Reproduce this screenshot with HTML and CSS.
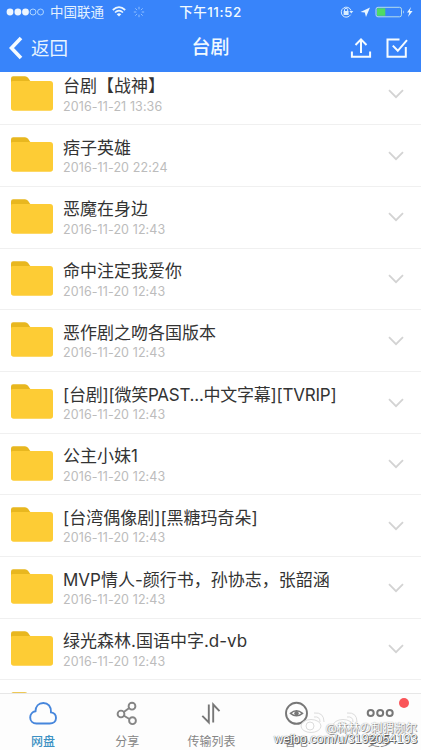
FILE: index.html
```html
<!DOCTYPE html>
<html lang="zh-CN">
<head>
<meta charset="utf-8">
<title>台剧</title>
<link rel="stylesheet" href="styles.css">
</head>
<body>
<svg class="defs" width="0" height="0">
  <symbol id="folder" viewBox="0 0 42 35">
    <path d="M0 12V2.5Q0 .3 2.2.3H14q1.8 0 3 1.5l3.2 4.4V12z" fill="#e8b71f"/>
    <path d="M0 5.8q.5-.9 2-.9H39q3 0 3 3V32q0 2.7-2.7 2.7H2.7Q0 34.7 0 32z" fill="#fdcc35"/>
  </symbol>
  <symbol id="chevron" viewBox="0 0 16 10"><path d="M1 1.2l7 7 7-7" fill="none" stroke="#d3d3d3" stroke-width="1.8"/></symbol>
</svg>
<div class="app">
  <header class="header">
    <div class="status">
      <div class="status-side">
        <svg class="signal" width="39" height="10" viewBox="0 0 39 10"><g fill="#eef6ff"><circle cx="4" cy="5" r="3.4"/><circle cx="11.9" cy="5" r="3.4"/><circle cx="19.5" cy="5" r="3.4"/></g><g fill="none" stroke="#b9dcff" stroke-width=".9"><circle cx="27" cy="5" r="3"/><circle cx="34.5" cy="5" r="3"/></g></svg>
        <span class="carrier">中国联通</span>
        <svg class="wifi" width="14" height="11" viewBox="0 0 14 11"><g fill="none" stroke="#eaf6ff" stroke-width="1.7"><path d="M.8 4Q7-1.7 13.200 4M3 6.500Q7 2.800 11 6.500"/></g><path d="M4.700 8.200Q7 6.300 9.300 8.200L7 10.600z" fill="#eaf6ff"/></svg>
        <svg class="spinner" width="12" height="12" viewBox="0 0 12 12" stroke="#8fbfff" stroke-width="1"><path d="M6 .8v2.500M6 8.700v2.500M.8 6h2.500M8.700 6h2.500M2.300 2.300l1.800 1.800M7.900 7.900l1.800 1.800M2.300 9.700l1.800-1.800M7.900 4.100l1.800-1.800"/></svg>
      </div>
      <span class="clock">下午11:52</span>
      <div class="status-side right">
        <svg width="80" height="14" viewBox="0 0 80 14">
          <g fill="none" stroke="#d8edff" stroke-width="1"><path d="M11.600 9.700A5 5 0 1 1 12 5.500"/><path d="M5.500 6V4.800q0-1.500 1.600-1.500t1.600 1.500V6"/></g>
          <path d="M4.600 6h5v4h-5zM10.300 6h4l-2 2.600z" fill="#d8edff"/>
          <path d="M31 2.500L27 12l-1.200-4.600L21.500 7z" fill="#e9f6ff"/>
          <rect x="37" y="2.300" width="25.500" height="9.500" rx="2" fill="none" stroke="#b5dceb"/>
          <path d="M38 3.300h8.300v7.500H38z" fill="#4fdb63"/><path d="M64 5.300q1.700 1.700 0 3.500z" fill="#cce9ff"/>
          <path d="M72 2l-4 5.500h2.300L69 12l4.600-6h-2.700z" fill="#e8f6ff"/>
        </svg>
      </div>
    </div>
    <div class="nav">
      <div class="back">
        <svg width="15" height="24" viewBox="0 0 15 24"><path d="M13 2L3.500 12l9.500 10" fill="none" stroke="#f5fbff" stroke-width="3.600"/></svg>
        <span>返回</span>
      </div>
      <h1>台剧</h1>
      <div class="actions">
        <svg width="22" height="22" viewBox="0 0 22 22"><g fill="none" stroke="#f5fbff" stroke-width="2"><path d="M11 16V2.800M5.500 8L11 2.400 16.500 8M1.900 14.500v5.300h18.200v-5.300"/></g></svg>
        <svg width="22" height="22" viewBox="0 0 22 22"><g fill="none" stroke="#f5fbff" stroke-width="2"><path d="M13.500 2.500H1.500v17.300h18.300V10"/><path d="M6.800 8.600l5 5.200L21 3.200"/></g></svg>
      </div>
    </div>
  </header>
  <main class="list">
    <div class="rows">
      <div class="row"><svg class="folder"><use href="#folder"/></svg><div class="info"><div class="name">台剧【战神】</div><div class="date">2016-11-21 13:36</div></div><svg class="chevron"><use href="#chevron"/></svg></div>
      <div class="row"><svg class="folder"><use href="#folder"/></svg><div class="info"><div class="name">痞子英雄</div><div class="date">2016-11-20 22:24</div></div><svg class="chevron"><use href="#chevron"/></svg></div>
      <div class="row"><svg class="folder"><use href="#folder"/></svg><div class="info"><div class="name">恶魔在身边</div><div class="date">2016-11-20 12:43</div></div><svg class="chevron"><use href="#chevron"/></svg></div>
      <div class="row"><svg class="folder"><use href="#folder"/></svg><div class="info"><div class="name">命中注定我爱你</div><div class="date">2016-11-20 12:43</div></div><svg class="chevron"><use href="#chevron"/></svg></div>
      <div class="row"><svg class="folder"><use href="#folder"/></svg><div class="info"><div class="name">恶作剧之吻各国版本</div><div class="date">2016-11-20 12:43</div></div><svg class="chevron"><use href="#chevron"/></svg></div>
      <div class="row"><svg class="folder"><use href="#folder"/></svg><div class="info"><div class="name tight">[台剧][微笑PAST...中文字幕][TVRIP]</div><div class="date">2016-11-20 12:43</div></div><svg class="chevron"><use href="#chevron"/></svg></div>
      <div class="row"><svg class="folder"><use href="#folder"/></svg><div class="info"><div class="name">公主小妹1</div><div class="date">2016-11-20 12:43</div></div><svg class="chevron"><use href="#chevron"/></svg></div>
      <div class="row"><svg class="folder"><use href="#folder"/></svg><div class="info"><div class="name">[台湾偶像剧][黑糖玛奇朵]</div><div class="date">2016-11-20 12:43</div></div><svg class="chevron"><use href="#chevron"/></svg></div>
      <div class="row"><svg class="folder"><use href="#folder"/></svg><div class="info"><div class="name">MVP情人-颜行书，孙协志，张韶涵</div><div class="date">2016-11-20 12:43</div></div><svg class="chevron"><use href="#chevron"/></svg></div>
      <div class="row"><svg class="folder"><use href="#folder"/></svg><div class="info"><div class="name">绿光森林.国语中字.d-vb</div><div class="date">2016-11-20 12:43</div></div><svg class="chevron"><use href="#chevron"/></svg></div>
      <div class="row"><svg class="folder"><use href="#folder"/></svg></div>
    </div>
  </main>
  <nav class="tabs">
    <div class="tab active"><svg width="30" height="26" viewBox="0 0 30 26"><path d="M8.500 23.500h13.200c3.700 0 6.300-2.300 6.300-5.500 0-3.300-2.300-5.300-5-5.600C23.300 6.500 20 3 15.300 3 10.500 3 7.600 6.400 7.500 11.300 4.500 11.800 2.200 14.300 2.200 17.500c0 3.500 2.700 6 6.300 6z" fill="none" stroke="#4686dc" stroke-width="1.900"/></svg><span>网盘</span></div>
    <div class="tab"><svg width="30" height="26" viewBox="0 0 30 26"><g fill="none" stroke="#858585" stroke-width="1.900"><circle cx="9" cy="14" r="3.400"/><circle cx="20" cy="6.200" r="3.400"/><circle cx="20.500" cy="20.700" r="3.400"/><path d="M11.800 12l5.400-3.900M12 15.700l5.400 3.300"/></g></svg><span>分享</span></div>
    <div class="tab"><svg width="30" height="26" viewBox="0 0 30 26"><path d="M12.800 4.500v18l-6.500-6.700M17.200 22.500v-18l6.300 6.700" fill="none" stroke="#777" stroke-width="1.900"/></svg><span>传输列表</span></div>
    <div class="tab"><svg width="30" height="26" viewBox="0 0 30 26"><g fill="none" stroke="#777" stroke-width="1.900"><circle cx="15.500" cy="13.300" r="10.500"/><path d="M9.500 13.300q6-5 12 0-6 5-12 0z" stroke-width="1.500"/></g><circle cx="15.500" cy="13.300" r="2.200" fill="#777"/></svg><span>看吧</span></div>
    <div class="tab"><svg width="30" height="26" viewBox="0 0 30 26"><g fill="none" stroke="#777" stroke-width="2"><circle cx="5.700" cy="13" r="3"/><circle cx="15.200" cy="13" r="3"/><circle cx="24.700" cy="13" r="3"/></g></svg><span>更多</span><i class="badge"></i></div>
    <div class="watermark">
      <svg width="62" height="25" viewBox="0 0 62 25"><g fill="#fff" fill-opacity=".65" stroke="#dcdcdc"><ellipse cx="12" cy="17" rx="10" ry="6.500"/><circle cx="11" cy="17" r="4"/><path d="M15 8q6-1 6 5M15 4q10-1 10 9" fill="none"/><ellipse cx="44" cy="17" rx="10" ry="6.500"/><circle cx="43" cy="17" r="4"/><path d="M48 8q6-1 6 5M48 4q10-1 10 9" fill="none"/></g></svg>
      <span class="mark-name">@林林の刺猬濒尔</span>
      <span class="mark-url">weibo.com/u/3192054193</span>
    </div>
  </nav>
</div>
</body>
</html>
```
FILE: styles.css
```css
* { box-sizing: border-box; }
body { margin: 0; background: #fff; font-family: Inter, "Noto Sans CJK SC", sans-serif; }
svg { display: block; flex: none; }
.defs { position: absolute; }
.app { width: 421px; height: 750px; display: flex; flex-direction: column; overflow: hidden; }
.header { height: 72px; flex: none; background: #3884fa; color: #f1f9ff; }
.status { height: 23px; display: grid; grid-template-columns: 1fr auto 1fr; align-items: center; }
.status-side { display: flex; align-items: center; padding-left: 6px; }
.status-side.right { justify-content: flex-end; padding: 0 2px 0 0; }
.carrier { font-size: 13.5px; line-height: 20px; margin-left: 5px; color: #e3f1ff; }
.wifi { margin-left: 8px; }
.spinner { margin-left: 7px; }
.clock { font-size: 13.500px; line-height: 20px; letter-spacing: .5px; font-weight: 500; }
.nav { height: 49px; display: grid; grid-template-columns: 1fr auto 1fr; align-items: center; }
.back { display: flex; align-items: center; gap: 8px; padding-left: 8px; font-size: 18.500px; line-height: 26px; color: #e8f4ff; }
.nav h1 { margin: 0; font-size: 19px; line-height: 28px; font-weight: 500; }
.actions { display: flex; justify-content: flex-end; gap: 14px; padding-right: 13px; }
.list { flex: 1; min-height: 0; overflow: hidden; }
.rows { margin-top: -8.4px; }
.row { height: 61.7px; border-bottom: 1px solid #f0f0f0; display: flex; align-items: flex-start; padding: 12px 17px 0 10.500px; }
.folder { width: 42px; height: 35px; }
.info { flex: 1; margin-left: 10.500px; white-space: nowrap; }
.name { font-size: 17px; line-height: 24px; margin-top: -1.500px; color: #333; }
.name.tight { letter-spacing: -.24px; }
.date { font-size: 12.500px; line-height: 16px; margin-top: .5px; color: #bcbcbc; letter-spacing: .1px; }
.chevron { width: 16px; height: 10px; margin-top: 13.500px; }
.tabs { position: relative; height: 57px; flex: none; border-top: 1px solid #e7e7e7; background: #fdfdfd; display: grid; grid-template-columns: repeat(5, 84.200px); }
.tab { position: relative; display: flex; flex-direction: column; align-items: center; padding: 5.500px 0 0 2px; font-size: 12px; line-height: 18px; color: #858585; }
.tab span { margin-top: 7px; }
.tab.active { color: #3d91c3; font-weight: 500; }
.badge { position: absolute; left: 62px; top: 4px; width: 10px; height: 10px; border-radius: 50%; background: #fa5559; }
.watermark { position: absolute; right: 4px; top: 15px; width: 143px; height: 42px; white-space: nowrap; }
.watermark svg { position: absolute; left: 25px; top: 0; }
.mark-name { position: absolute; right: 0; top: 11px; font-size: 11.500px; line-height: 16px; color: #fff; text-shadow: 0 0 1px #777, 1px 1px 0 #999; }
.mark-url { position: absolute; left: 0; top: 22px; font-family: "Liberation Sans", sans-serif; font-size: 12.500px; line-height: 16px; color: #fff; text-shadow: 0 0 1px #333, 1px 1px 0 #666; }
```
